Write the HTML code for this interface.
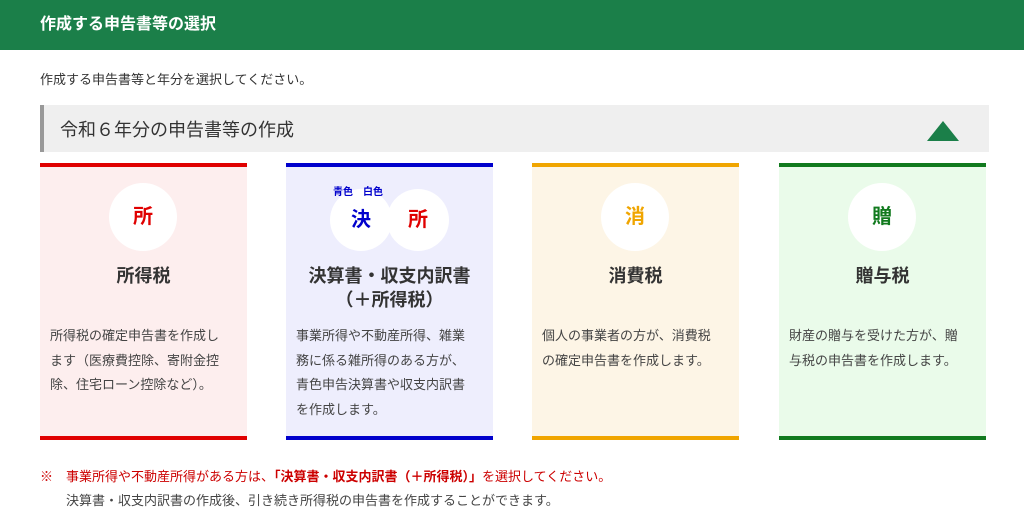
<!DOCTYPE html>
<html><head><meta charset="utf-8"><style>
*{margin:0;padding:0;box-sizing:border-box}
body{width:1024px;height:527px;background:#fff;font-family:"Liberation Sans","Noto Sans CJK JP",sans-serif;color:#333;position:relative;overflow:hidden}
.hd{position:absolute;left:0;top:0;width:1024px;height:50px;background:#1b7f49;color:#fff;font-weight:bold;font-size:16px;padding:10px 0 0 40px}
.sub{position:absolute;left:40px;top:69px;font-size:13px}
.bar{position:absolute;left:40px;top:105px;width:949px;height:47px;background:#efefef;border-left:4px solid #999;font-size:18px;padding:11px 0 0 16px}
.tri{position:absolute;right:30px;top:16px;width:0;height:0;border-left:16px solid transparent;border-right:16px solid transparent;border-bottom:20px solid #1b7f49}
.card{position:absolute;top:163px;width:207px;height:277px;border-top:4px solid;border-bottom:4px solid}
.c{position:absolute;top:16px;width:68px;height:68px;border-radius:50%;background:#fff;font-weight:bold;font-size:20px;text-align:center;line-height:68px}
.t{position:absolute;left:0;width:100%;top:97px;text-align:center;font-weight:bold;font-size:18px;line-height:24px;color:#333}
.d{position:absolute;left:10px;right:22px;top:157px;font-size:13px;line-height:24.5px;color:#444}
.n{position:absolute;left:40px;top:465px;font-size:13px;line-height:24px;color:#444}
</style></head><body>
<div class="hd">作成する申告書等の選択</div>
<div class="sub">作成する申告書等と年分を選択してください。</div>
<div class="bar">令和６年分の申告書等の作成<div class="tri"></div></div>

<div class="card" style="left:40px;background:#fdeeee;border-color:#e00000">
<div class="c" style="left:69px;color:#e00000">所</div>
<div class="t">所得税</div>
<div class="d">所得税の確定申告書を作成します（医療費控除、寄附金控除、住宅ローン控除など）。</div></div>

<div class="card" style="left:286px;background:#eeeefd;border-color:#0000cc">
<div class="c" style="left:44px;top:22px;width:62px;height:62px;line-height:62px;color:#0000cc">決</div>
<div class="c" style="left:101px;top:22px;width:62px;height:62px;line-height:62px;color:#e00000">所</div>
<div style="position:absolute;left:47px;top:16px;font-size:10px;font-weight:bold;color:#0000cc;white-space:nowrap">青色　白色</div>
<div class="t">決算書・収支内訳書<br>（＋所得税）</div>
<div class="d">事業所得や不動産所得、雑業務に係る雑所得のある方が、青色申告決算書や収支内訳書を作成します。</div></div>

<div class="card" style="left:532px;background:#fdf5e6;border-color:#f0a500">
<div class="c" style="left:69px;color:#f0a500">消</div>
<div class="t">消費税</div>
<div class="d">個人の事業者の方が、消費税の確定申告書を作成します。</div></div>

<div class="card" style="left:779px;background:#eafbea;border-color:#117a1e">
<div class="c" style="left:69px;color:#117a1e">贈</div>
<div class="t">贈与税</div>
<div class="d">財産の贈与を受けた方が、贈与税の申告書を作成します。</div></div>

<div class="n"><span style="color:#c00">※　事業所得や不動産所得がある方は、<b>「決算書・収支内訳書（＋所得税）」</b>を選択してください。</span><br>　　決算書・収支内訳書の作成後、引き続き所得税の申告書を作成することができます。</div>
</body></html>
